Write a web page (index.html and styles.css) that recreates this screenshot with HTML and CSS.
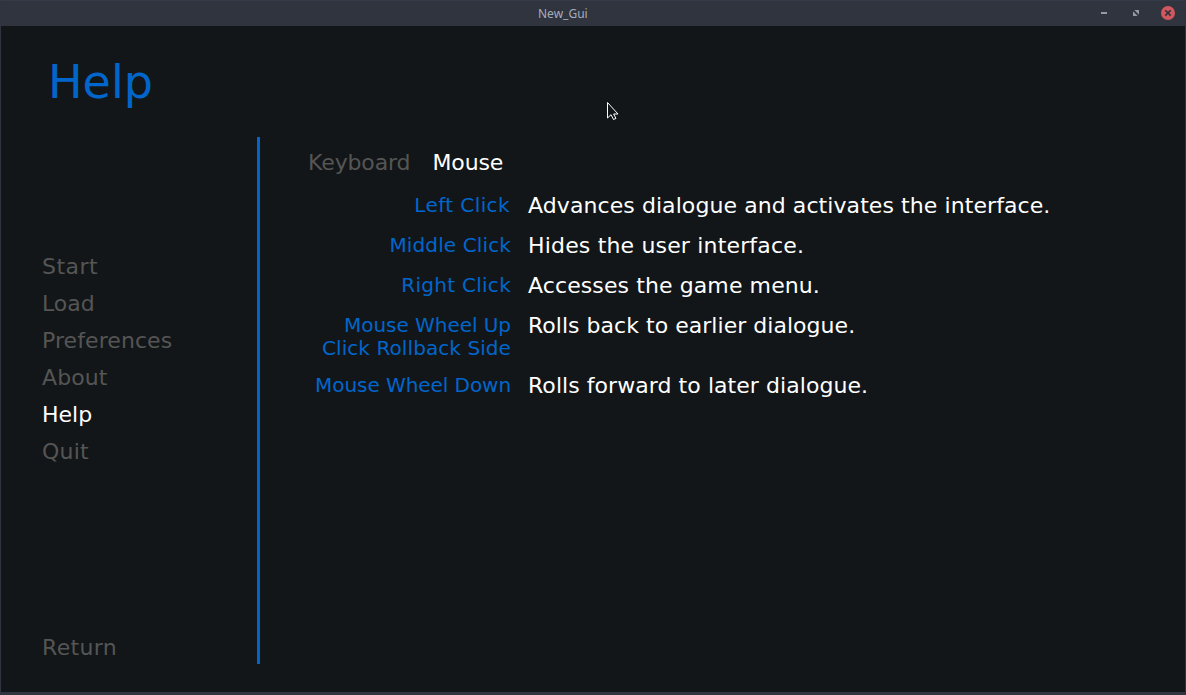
FILE: index.html
```html
<!DOCTYPE html>
<html lang="en"><head><meta charset="utf-8"><title>New_Gui</title><link rel="stylesheet" href="styles.css"></head>
<body>
<div class="window">
<header class="titlebar"><span class="title">New_Gui</span>
<svg class="controls" width="86" height="26" viewBox="0 0 86 26"><path class="glyph" d="M1 12h6"/><path class="arrows" d="M34.3 9H39v4.7zM33 10.3v4.7h4.7z"/><circle class="close" cx="68" cy="12" r="7"/><path class="cross" d="M65.3 9.3l5.4 5.4m0-5.4l-5.4 5.4"/></svg>
</header>
<main class="menu">
<h1 class="heading">Help</h1>
<div class="body">
<nav class="nav"><div class="links"><a class="start">Start</a><a>Load</a><a class="preferences">Preferences</a><a class="about">About</a><a class="active">Help</a><a class="quit">Quit</a></div><a class="return">Return</a></nav>
<section class="content">
<div class="tabs"><a>Keyboard</a><a class="active">Mouse</a></div>
<dl class="row left-click"><dt>Left Click</dt><dd>Advances dialogue and activates the interface.</dd></dl>
<dl class="row middle-click"><dt>Middle Click</dt><dd>Hides the user interface.</dd></dl>
<dl class="row right-click"><dt>Right Click</dt><dd>Accesses the game menu.</dd></dl>
<dl class="row wheel-up"><dt>Mouse Wheel Up<br><span class="rollback">Click Rollback Side</span></dt><dd>Rolls back to earlier dialogue.</dd></dl>
<dl class="row wheel-down"><dt>Mouse Wheel Down</dt><dd>Rolls forward to later dialogue.</dd></dl>
</section>
</div>
</main>
<svg class="cursor" width="14" height="22" viewBox="0 0 14 22"><path d="M1.5 1.5v15.5l3.5-3.3 2.5 4.8 2.5-1.1-2.4-4.4h4.4z"/></svg>
</div>
</body></html>
```
FILE: styles.css
```css
* { box-sizing: border-box; }
body { margin: 0; }
.window { position: relative; width: 1186px; height: 695px; background: #121618; border: 1px solid #2f343f; border-top: 0; border-bottom-width: 3px; font-family: "DejaVu Sans", sans-serif; font-size: 22px; color: #fff; overflow: hidden; }
.titlebar { height: 26px; margin: 0 -1px; display: flex; align-items: center; background: #2f343f; border-top: 1px solid #353a48; padding-left: 538px; justify-content: space-between; }
.title { font: 12px/24px "Noto Sans", sans-serif; color: #a5adbd; }
.glyph { stroke: #9499a5; stroke-width: 2; }
.arrows { fill: #9499a5; }
.close { fill: #d0575d; }
.cross { stroke: #2f343f; stroke-width: 1.7; }
.heading { margin: 0; height: 111px; padding: 28px 0 0 47px; font-size: 46px; line-height: 56px; font-weight: 400; color: #0066cc; }
.body { display: flex; height: 527px; }
.nav { width: 259px; border-right: 3px solid #0066cc; padding: 111px 0 0 41px; display: flex; flex-direction: column; justify-content: space-between; color: #555; line-height: 37px; }
.links { display: flex; flex-direction: column; }
.active { color: #fff; }
.start { letter-spacing: 0.45px; }
.preferences, .about { letter-spacing: 0.08px; }
.quit { letter-spacing: 0.25px; }
.return { line-height: 33px; letter-spacing: 0.35px; }
.content { padding: 13px 0 0 48px; }
.tabs { display: flex; gap: 22px; color: #555; line-height: 26px; margin-bottom: 17px; letter-spacing: -0.12px; }
.row { display: flex; gap: 17px; margin: 0; height: 40px; line-height: 26px; }
dt { width: 203px; text-align: right; font-size: 20px; line-height: 23px; padding-top: 1px; color: #0066cc; white-space: nowrap; }
dd { margin: 0; white-space: nowrap; }
.left-click dt { letter-spacing: 0.4px; padding-right: 1px; }
.left-click dd { letter-spacing: 0.08px; }
.middle-click dt { letter-spacing: 0.12px; }
.middle-click dd { letter-spacing: 0.17px; }
.right-click dt { letter-spacing: 0.28px; }
.right-click dd { letter-spacing: 0.1px; }
.wheel-up { height: 60px; letter-spacing: 0.03px; }
.wheel-up dt { letter-spacing: -0.04px; }
.rollback { letter-spacing: 0.08px; }
.wheel-down dt { letter-spacing: -0.06px; }
.wheel-down dd { letter-spacing: 0.06px; }
.cursor { position: absolute; left: 605px; top: 101px; fill: #121618; stroke: #fff; }
```
